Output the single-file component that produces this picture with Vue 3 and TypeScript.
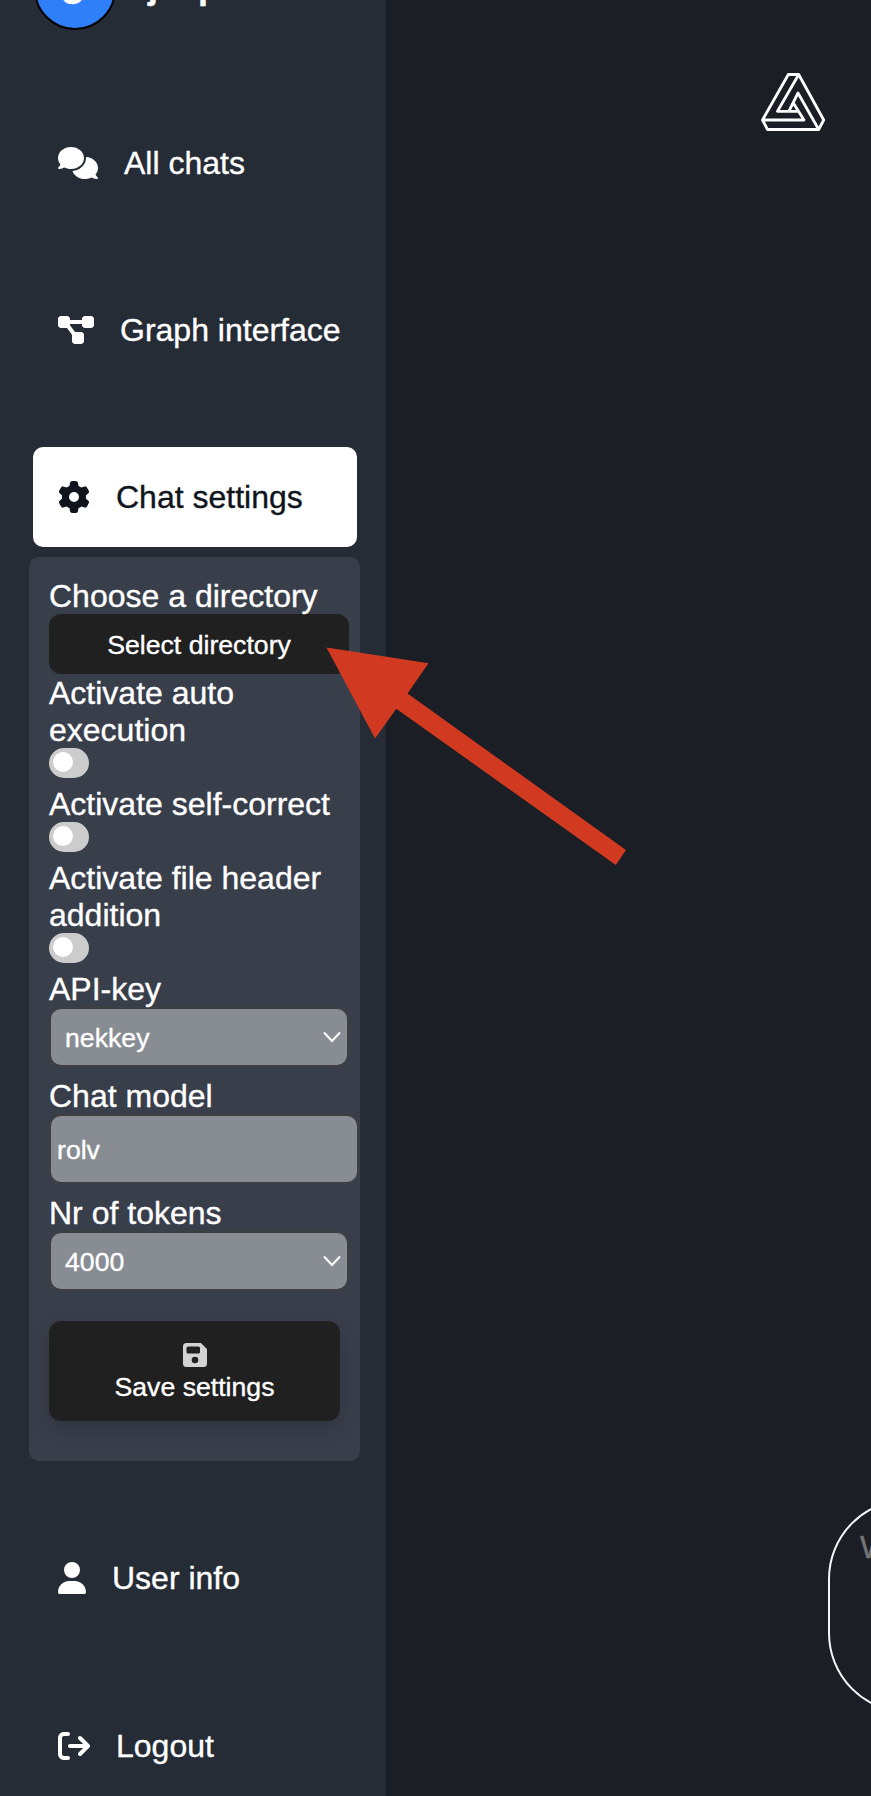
<script setup lang="ts">
interface NavItem {
  label: string
  width: number
  box: string
  path: string
}

const top: NavItem[] = [
  {
    label: 'All chats',
    width: 40,
    box: '0 0 640 512',
    path: 'M208 352c114.900 0 208-78.800 208-176S322.900 0 208 0S0 78.800 0 176c0 38.600 14.700 74.300 39.600 103.400c-3.500 9.400-8.700 17.700-14.200 24.700c-4.800 6.200-9.700 11-13.300 14.300c-1.800 1.600-3.300 2.900-4.300 3.700c-.5 .4-.9 .7-1.100 .8l-.2 .2C1 327.200-1.400 334.400 .8 340.900S9.100 352 16 352c21.800 0 43.800-5.600 62.100-12.500c9.200-3.500 17.800-7.400 25.200-11.400C134.100 343.300 169.800 352 208 352zM448 176c0 112.300-99.100 196.900-216.500 207C255.800 457.400 336.400 512 432 512c38.200 0 73.900-8.700 104.700-23.900c7.500 4 16 7.900 25.200 11.400c18.300 6.900 40.300 12.500 62.100 12.500c6.900 0 13.100-4.500 15.200-11.100c2.100-6.600-.2-13.800-5.800-17.900l-.2-.2c-.2-.2-.6-.4-1.100-.8c-1-.8-2.500-2-4.300-3.700c-3.600-3.300-8.500-8.100-13.300-14.300c-5.500-7-10.700-15.400-14.200-24.700c24.900-29 39.600-64.700 39.600-103.400c0-92.800-84.900-168.900-192.600-175.500c.4 5.100 .6 10.300 .6 15.500z',
  },
  {
    label: 'Graph interface',
    width: 36,
    box: '0 0 576 512',
    path: 'M0 80C0 53.500 21.500 32 48 32h96c26.500 0 48 21.500 48 48V96H384V80c0-26.500 21.500-48 48-48h96c26.500 0 48 21.500 48 48v96c0 26.500-21.500 48-48 48H432c-26.500 0-48-21.500-48-48V160H192v16c0 1.700-.1 3.400-.3 5L272 288h96c26.500 0 48 21.500 48 48v96c0 26.500-21.500 48-48 48H272c-26.500 0-48-21.500-48-48V336c0-1.700 .1-3.400 .3-5L144 224H48c-26.500 0-48-21.500-48-48V80z',
  },
]

const settings: NavItem = {
  label: 'Chat settings',
  width: 32,
  box: '0 0 512 512',
  path: 'M495.900 166.600c3.200 8.700 .5 18.400-6.400 24.600l-43.300 39.400c1.100 8.300 1.700 16.800 1.700 25.400s-.6 17.100-1.700 25.400l43.300 39.400c6.900 6.200 9.600 15.900 6.400 24.600c-4.400 11.900-9.700 23.300-15.800 34.300l-4.700 8.100c-6.600 11-14 21.400-22.100 31.200c-5.900 7.200-15.700 9.600-24.500 6.800l-55.700-17.700c-13.400 10.300-28.200 18.900-44 25.400l-12.500 57.100c-2 9.100-9 16.300-18.200 17.800c-13.800 2.300-28 3.500-42.500 3.500s-28.700-1.200-42.500-3.500c-9.200-1.500-16.200-8.700-18.200-17.800l-12.500-57.100c-15.800-6.500-30.600-15.100-44-25.400L83.100 425.900c-8.800 2.800-18.600 .3-24.500-6.800c-8.100-9.800-15.500-20.200-22.100-31.200l-4.700-8.100c-6.100-11-11.400-22.400-15.800-34.300c-3.200-8.700-.5-18.400 6.400-24.600l43.300-39.400C64.600 273.100 64 264.600 64 256s.6-17.100 1.700-25.400L22.400 191.200c-6.900-6.200-9.600-15.900-6.400-24.600c4.400-11.900 9.700-23.300 15.800-34.300l4.700-8.100c6.600-11 14-21.400 22.100-31.200c5.900-7.200 15.700-9.600 24.500-6.800l55.700 17.700c13.400-10.300 28.200-18.900 44-25.400l12.500-57.100c2-9.100 9-16.300 18.200-17.800C227.300 1.200 241.500 0 256 0s28.700 1.200 42.500 3.500c9.200 1.500 16.200 8.700 18.200 17.800l12.500 57.100c15.800 6.500 30.600 15.100 44 25.400l55.700-17.700c8.800-2.800 18.600-.3 24.500 6.800c8.100 9.800 15.500 20.200 22.100 31.200l4.700 8.100c6.100 11 11.400 22.400 15.800 34.300zM256 336a80 80 0 1 0 0-160 80 80 0 1 0 0 160z',
}

const bottom: NavItem[] = [
  {
    label: 'User info',
    width: 28,
    box: '0 0 448 512',
    path: 'M224 256A128 128 0 1 0 224 0a128 128 0 1 0 0 256zm-45.700 48C79.800 304 0 383.800 0 482.300C0 498.700 13.300 512 29.700 512H418.300c16.400 0 29.700-13.300 29.700-29.700C448 383.800 368.200 304 269.700 304H178.300z',
  },
  {
    label: 'Logout',
    width: 32,
    box: '0 0 512 512',
    path: 'M502.600 278.600c12.500-12.500 12.500-32.800 0-45.300l-128-128c-12.500-12.500-32.800-12.500-45.300 0s-12.500 32.800 0 45.300L402.700 224 192 224c-17.700 0-32 14.300-32 32s14.300 32 32 32l210.700 0-73.400 73.400c-12.500 12.500-12.500 32.800 0 45.300s32.800 12.500 45.300 0l128-128zM160 96c17.700 0 32-14.300 32-32s-14.300-32-32-32L96 32C43 32 0 75 0 128L0 384c0 53 43 96 96 96l64 0c17.700 0 32-14.300 32-32s-14.300-32-32-32l-64 0c-17.700 0-32-14.300-32-32l0-256c0-17.700 14.300-32 32-32l64 0z',
  },
]

const toggles: string[] = ['Activate auto execution', 'Activate self-correct', 'Activate file header addition']
</script>

<template>
  <div class="page">
    <aside class="sidebar">
      <div class="profile">
        <div class="avatar">J</div>
        <span class="name">jesp</span>
      </div>
      <nav class="group">
        <div v-for="n in top" :key="n.label" class="item">
          <svg :width="n.width" height="32" :viewBox="n.box"><path :d="n.path" /></svg>
          <span>{{ n.label }}</span>
        </div>
        <div class="item active">
          <svg :width="settings.width" height="32" :viewBox="settings.box"><path :d="settings.path" /></svg>
          <span>{{ settings.label }}</span>
        </div>
      </nav>

      <section class="panel">
        <div class="label">Choose a directory</div>
        <button class="pick">Select directory</button>
        <template v-for="t in toggles" :key="t">
          <div class="label">{{ t }}</div>
          <div class="toggle-row"><span class="toggle"><i class="knob"></i></span></div>
        </template>
        <div class="label">API-key</div>
        <div class="field">
          <span>nekkey</span>
          <svg width="18" height="12" viewBox="0 0 18 12"><path d="M1 1.500 9 10l8-8.500" /></svg>
        </div>
        <div class="label">Chat model</div>
        <div class="field text"><span>rolv</span></div>
        <div class="label">Nr of tokens</div>
        <div class="field">
          <span>4000</span>
          <svg width="18" height="12" viewBox="0 0 18 12"><path d="M1 1.500 9 10l8-8.500" /></svg>
        </div>
        <button class="save">
          <svg width="24" height="24" viewBox="0 0 24 24">
            <path fill-rule="evenodd" d="M3.500 0H18l6 6v14.500a3.500 3.500 0 0 1-3.500 3.500h-17A3.500 3.500 0 0 1 0 20.500v-17A3.500 3.500 0 0 1 3.500 0zM5 3.500A1.500 1.500 0 0 0 3.500 5v4A1.500 1.500 0 0 0 5 10.500h10.500A1.500 1.500 0 0 0 17 9V5a1.500 1.500 0 0 0-1.500-1.500zM12 13.700a3.300 3.300 0 1 0 0 6.600 3.300 3.300 0 0 0 0-6.600z" />
          </svg>
          <span>Save settings</span>
        </button>
      </section>

      <nav class="group lower">
        <div v-for="n in bottom" :key="n.label" class="item">
          <svg :width="n.width" height="32" :viewBox="n.box"><path :d="n.path" /></svg>
          <span>{{ n.label }}</span>
        </div>
      </nav>
    </aside>

    <main class="main">
      <svg class="logo" width="64" height="60" viewBox="0 0 64 60">
        <path d="M27.300 2.500h10.400L62.700 48l-5 9.500H6.500L1.500 48zM37.700 2.500 16.500 39.300h20.300M1.500 48H43L32 30.500M27.800 39.300 37 21l20.700 36.500" />
      </svg>
      <div class="prompt">W</div>
    </main>

    <svg class="arrow" width="302" height="220" viewBox="0 0 302 220">
      <path d="M-.5-.5 101.500 15.200 80.500 45.500 299 202 288.800 217 69.300 60.800 48 90.500z" />
    </svg>
  </div>
</template>

<style>
body {
  background: #1b1e25;
}
</style>

<style scoped>
.page {
  position: relative;
  display: flex;
  width: 871px;
  height: 1796px;
  overflow: hidden;
  background: #1b1e25;
  color: #fff;
  font: 32px/37px "Liberation Sans", Arial, sans-serif;
  -webkit-text-stroke: 0.35px currentColor;
}
.page * {
  box-sizing: border-box;
}
.sidebar {
  flex: none;
  width: 386px;
  height: 1796px;
  background: #262c36;
}
.profile {
  display: flex;
  gap: 32px;
  height: 113px;
  padding-left: 34px;
}
.avatar {
  flex: none;
  width: 82px;
  height: 82px;
  margin-top: -52px;
  padding-right: 3px;
  border: 2px solid #000;
  border-radius: 50%;
  background: #2e7ff8;
  font-size: 44px;
  font-weight: 700;
  line-height: 78px;
  text-align: center;
}
.name {
  margin-top: -33px;
  font-size: 36px;
  font-weight: 700;
}
.group {
  display: flex;
  flex-direction: column;
  gap: 67px;
  padding-left: 33px;
}
.item {
  display: flex;
  align-items: center;
  gap: 26px;
  width: 324px;
  height: 100px;
  padding-left: 25px;
  border-radius: 10px;
  white-space: nowrap;
}
.item svg {
  flex: none;
  fill: currentColor;
}
.active {
  background: #fff;
  color: #10151d;
}
.panel {
  width: 331px;
  height: 904px;
  margin: 10px 0 0 29px;
  padding: 20px;
  border-radius: 10px;
  background: #393e4b;
}
.label {
  position: relative;
  top: 1px;
}
button {
  display: flex;
  align-items: center;
  justify-content: center;
  padding: 2px 0 0;
  border: 0;
  border-radius: 12px;
  background: #202020;
  color: #fff;
  font: 26.667px/31px "Liberation Sans", Arial, sans-serif;
}
.pick {
  width: 300px;
  height: 60px;
}
.toggle-row {
  height: 37px;
}
.toggle {
  display: block;
  width: 40px;
  height: 30px;
  padding: 4px;
  border-radius: 15px;
  background: #ccc;
}
.knob {
  display: block;
  width: 20px;
  height: 20px;
  border-radius: 50%;
  background: #fff;
}
.field {
  display: flex;
  align-items: center;
  justify-content: space-between;
  width: 300px;
  height: 60px;
  margin-bottom: 10px;
  padding: 0 6px 0 14px;
  border: 2px solid #3f3f42;
  border-radius: 12px;
  background: #888c93;
  font-size: 26.667px;
}
.field span {
  padding-top: 2px;
}
.field svg {
  fill: none;
  stroke: #fff;
  stroke-width: 2;
}
.text {
  width: 310px;
  height: 70px;
  padding-left: 6px;
}
.save {
  flex-direction: column;
  justify-content: flex-start;
  gap: 5px;
  width: 291px;
  height: 100px;
  margin-top: 30px;
  padding-top: 22px;
  box-shadow: 0 8px 20px rgba(0, 0, 0, 0.15);
}
.save svg {
  fill: #d3d3d3;
}
.lower {
  margin-top: 67px;
  gap: 68px;
}
.main {
  flex: 1;
  display: flex;
  flex-direction: column;
  min-width: 0;
}
.logo {
  margin: 72px 0 0 375px;
  fill: none;
  stroke: #fff;
  stroke-width: 2.800;
  stroke-linejoin: round;
}
.prompt {
  flex: none;
  width: 600px;
  height: 214px;
  margin: 1367px 0 0 442px;
  padding: 28px 30px;
  border: 2px solid #f5f5f5;
  border-radius: 80px;
  color: #757575;
}
.arrow {
  position: absolute;
  left: 327px;
  top: 648px;
  overflow: visible;
  fill: #d13a20;
}
</style>
